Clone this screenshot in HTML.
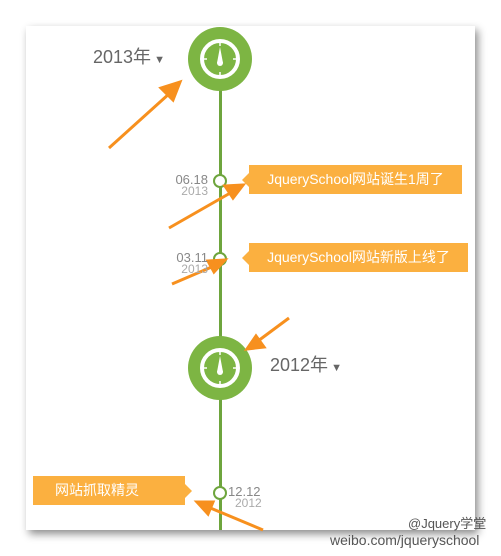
<!DOCTYPE html>
<html><head><meta charset="utf-8"><style>
body{margin:0;width:501px;height:556px;background:#fff;position:relative;overflow:hidden;font-family:"Liberation Sans","Noto Sans CJK SC",sans-serif}
.a{position:absolute}
.box{position:absolute;background:#fbb040;color:#fff;font-size:14px;line-height:29px;height:29px}
.box:before{content:"";position:absolute;top:8px;border:7px solid transparent}
.r:before{left:-14px;border-right-color:#fbb040}
.l:before{right:-14px;border-left-color:#fbb040}
.d{position:absolute;color:#888;font-size:13px;line-height:11px;text-align:right}
.yr{position:absolute;color:#666;font-size:18px}
</style></head><body>
<div style="position:absolute;left:26px;top:26px;width:449px;height:504px;background:#fff;box-shadow:3px 4px 8px rgba(0,0,0,.45)"></div>
<div class="a" style="left:219px;top:60px;width:3px;height:470px;background:#6ea53d"></div>
<svg class="a" style="left:0;top:0" width="501" height="556">
<g id="c"><circle cx="220" cy="59" r="32" fill="#7db543"/><circle cx="220" cy="59" r="18" fill="none" stroke="#fff" stroke-width="4"/>
<g stroke="#fff" stroke-width="1.5"><line x1="220" y1="42" x2="220" y2="46"/><line x1="220" y1="72" x2="220" y2="76"/><line x1="203" y1="59" x2="207" y2="59"/><line x1="233" y1="59" x2="237" y2="59"/></g>
<path d="M220 47 L223 63 L217 63 Z" fill="#fff"/><circle cx="220" cy="63" r="3" fill="#fff"/></g>
<use href="#c" y="309"/>
<circle cx="220" cy="181" r="6" fill="#fff" stroke="#6ea53d" stroke-width="2"/>
<circle cx="220" cy="259" r="6" fill="#fff" stroke="#6ea53d" stroke-width="2"/>
<circle cx="220" cy="493" r="6" fill="#fff" stroke="#6ea53d" stroke-width="2"/>
<g stroke="#f7901e" stroke-width="3" fill="#f7901e">
<line x1="109" y1="148" x2="170" y2="93"/><path d="M180 82 L161 88 L173 100 Z"/>
<line x1="169" y1="228" x2="232" y2="192"/><path d="M243 185 L225 186 L233 198 Z"/>
<line x1="172" y1="284" x2="214" y2="266"/><path d="M225 260 L208 261 L214 272 Z"/>
<line x1="289" y1="318" x2="258" y2="341"/><path d="M247 349 L264 347 L256 336 Z"/>
<line x1="263" y1="530" x2="208" y2="507"/><path d="M197 502 L208 514 L213 502 Z"/>
</g>
</svg>
<div class="yr" style="left:93px;top:43px">2013年<span style="font-size:11px"> ▼</span></div>
<div class="yr" style="left:270px;top:351px">2012年<span style="font-size:11px"> ▼</span></div>
<div class="box r" style="left:249px;top:165px;width:213px;text-align:center">JquerySchool网站诞生1周了</div>
<div class="box r" style="left:249px;top:243px;width:219px;text-align:center">JquerySchool网站新版上线了</div>
<div class="box l" style="left:33px;top:476px;width:152px;padding-left:22px;box-sizing:border-box">网站抓取精灵</div>
<div class="d" style="left:155px;top:174px;width:53px">06.18<br><span style="font-size:12px;color:#aaa">2013</span></div>
<div class="d" style="left:155px;top:252px;width:53px">03.11<br><span style="font-size:12px;color:#aaa">2013</span></div>
<div class="d" style="left:228px;top:486px;width:40px;text-align:left">12.12<br><span style="font-size:12px;padding-left:7px;color:#aaa">2012</span></div>
<div class="a" style="left:408px;top:513px;font-size:13px;color:#555">@Jquery学堂</div>
<div class="a" style="left:330px;top:532px;font-size:14px;color:#555">weibo.com/jqueryschool</div>
</body></html>
